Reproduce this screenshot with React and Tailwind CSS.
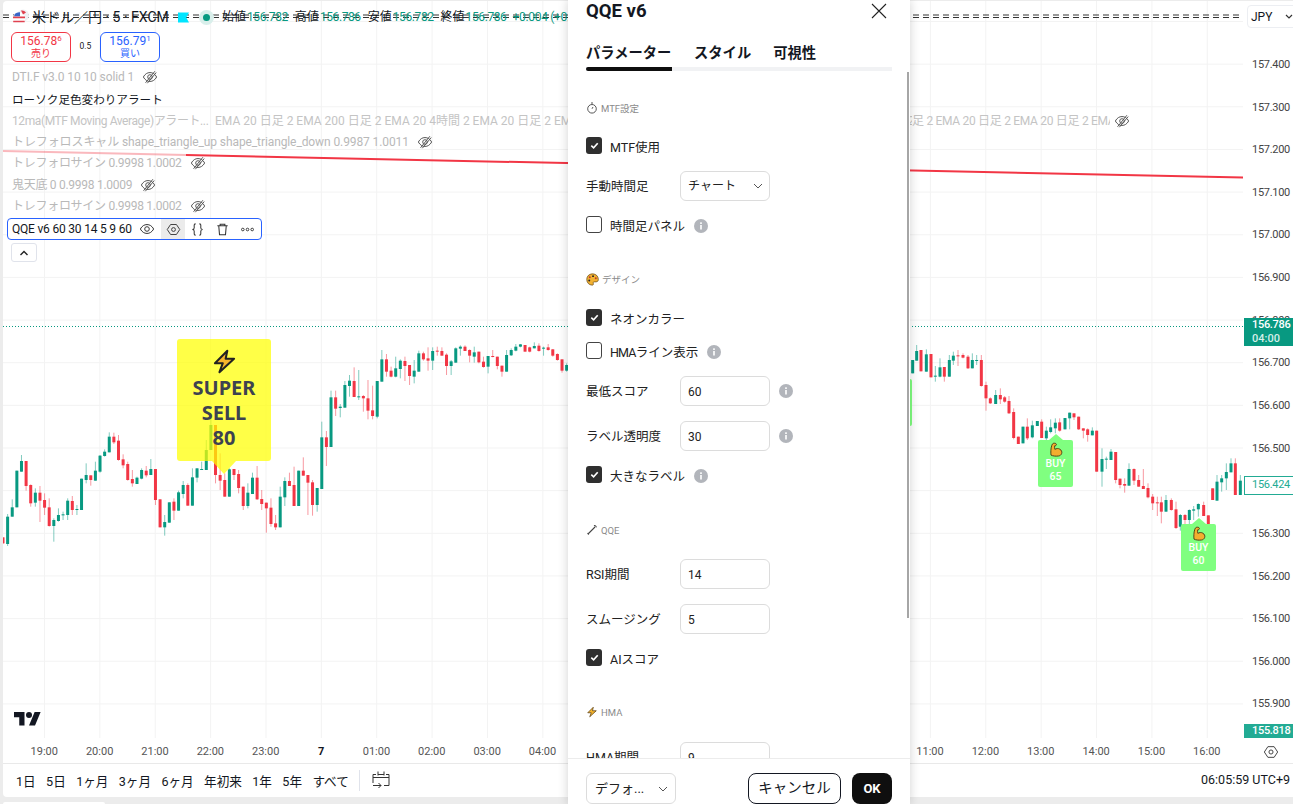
import React from "react";

const L = [[652,670,652,672,0],[590,672,582,678,1],[562,590,538,590,1],[452,562,452,562,1],[423,455,405,455,1],[423,498,423,512,0],[495,550,493,560,0],[518,548,505,560,1],[518,542,498,606,0],[540,563,520,585,0],[562,618,535,620,0],[600,618,595,665,1],[585,603,565,605,1],[583,585,575,600,1],[542,585,535,600,1],[543,570,528,585,0],[567,570,555,585,1],[476,570,476,570,1],[465,480,430,490,1],[466,480,466,497,0],[452,482,425,482,1],[407,455,405,458,1],[395,408,388,410,1],[350,397,337,397,1],[350,367,338,372,0],[362,420,345,422,0],[418,436,403,445,0],[432,480,425,482,0],[477,490,450,500,0],[473,492,470,492,1],[450,476,445,478,1],[452,466,438,472,0],[447,465,417,465,1],[447,540,447,555,0],[538,622,538,622,0],[606,622,585,647,1],[547,608,547,608,1],[545,572,535,600,0],[517,572,512,572,1],[495,522,483,535,1],[495,557,490,557,0],[472,557,445,557,1],[445,473,445,487,1],[447,449,425,450,1],[390,450,360,450,1],[315,390,295,390,1],[315,465,315,490,0],[465,482,400,510,0],[480,530,460,530,0],[448,530,445,530,1],[447,465,447,480,0],[462,504,450,520,0],[500,558,500,570,0],[518,558,490,565,1],[473,522,458,522,1],[473,538,438,540,0],[537,552,510,570,0],[548,565,548,638,0],[563,612,535,620,0],[610,622,585,630,0],[530,622,500,622,1],[483,532,472,558,1],[483,498,458,498,0],[495,558,440,558,0],[452,558,452,558,1],[452,467,412,467,0],[465,488,465,585,0],[487,555,480,587,0],[504,555,504,575,1],[352,507,305,507,1],[352,381,333,438,0],[232,381,212,381,1],[232,266,212,288,0],[260,264,252,292,1],[195,263,183,263,1],[182,198,165,230,1],[183,231,142,231,0],[229,231,150,240,1],[228,235,225,275,0],[235,272,180,298,0],[271,288,197,298,0],[183,290,183,295,1],[118,185,90,185,1],[118,155,102,170,0],[152,170,140,172,0],[145,170,110,172,1],[122,147,118,175,1],[123,138,110,183,0],[135,168,135,195,0],[152,170,120,190,1],[100,155,92,155,1],[100,118,95,122,0],[115,122,82,152,0],[93,122,82,150,1],[92,95,80,107,0],[93,107,82,107,0],[104,138,100,165,0],[124,138,120,165,1],[85,128,82,128,1],[80,86,76,107,1],[80,93,76,93,0],[90,107,88,127,0],[97,110,80,128,1],[95,127,95,130,0],[125,141,110,143,0],[108,140,108,160,1],[108,110,90,112,0],[110,138,110,148,0],[137,155,137,170,0],[105,155,90,155,1],[90,106,85,108,1],[80,92,72,94,1],[73,80,72,82,1],[75,95,75,95,0],[82,95,80,97,0],[78,85,67,85,1],[77,93,70,95,0],[83,85,80,107,1],[82,90,72,92,0],[88,107,87,110,0],[102,120,100,122,0],[118,152,118,158,0],[135,152,130,155,1]];

const R = [[8,120,160,120,160,1],[20,93,122,75,122,1],[33,90,154,90,154,0],[49,103,155,88,155,1],[63,102,172,102,172,0],[76,167,170,138,185,1],[90,142,170,115,172,1],[103,141,170,141,185,0],[118,120,170,105,170,1],[130,107,122,95,135,1],[144,106,108,90,138,0],[159,105,113,100,115,0],[174,110,145,105,147,0],[187,120,145,100,145,1],[200,120,122,105,135,1],[214,120,198,105,200,0],[228,195,235,185,272,0],[241,235,250,232,252,0],[257,225,252,210,252,1],[271,225,238,205,252,0],[284,232,245,228,248,0],[297,243,280,228,282,0],[311,276,354,265,358,0],[325,350,372,350,372,0],[339,320,370,320,370,1],[352,320,355,295,360,0],[367,316,352,302,355,1],[382,303,318,303,318,1],[395,305,354,298,354,0],[409,332,355,320,365,1],[422,322,336,298,340,1],[436,308,325,295,340,1],[449,307,332,295,335,0],[465,294,328,294,328,1],[479,278,295,278,328,1],[492,280,292,280,300,0],[506,290,328,290,330,0],[520,325,332,325,355,0],[533,328,345,325,365,0],[547,332,346,322,346,1],[560,332,455,332,455,0],[576,417,455,385,500,1],[589,416,418,410,447,1],[603,395,420,387,420,1],[617,396,480,396,490,0],[630,476,495,476,505,0],[644,492,497,475,518,0],[657,447,497,430,497,1],[672,447,482,445,495,0],[686,480,500,465,500,0],[700,498,507,447,507,0],[714,504,532,490,535,0],[728,530,550,522,570,0],[742,547,550,530,588,0],[754,547,575,530,610,0],[768,540,575,525,575,1],[784,540,570,535,572,0],[798,568,624,545,627,0],[811,585,620,582,632,1],[825,585,600,582,620,0],[838,570,600,568,615,1],[851,568,572,558,600,1],[865,552,568,550,590,1],[881,555,588,545,588,0],[895,586,630,586,630,0],[908,505,540,505,540,0],[921,485,542,465,542,1],[935,475,487,465,515,1],[949,456,475,430,510,1],[963,430,457,415,457,1],[976,430,525,415,525,0],[991,482,525,465,525,1]];

const candles = [
  ...L.map((c, i) => ({ x: 3 + i * 4.62, bt: c[0], bb: c[1], wt: c[2], wb: c[3], up: c[4] })),
  ...R.map((c) => ({ x: 910 + c[0] / 3, bt: c[1], bb: c[2], wt: c[3], wb: c[4], up: c[5] })),
];

const hours = ["19:00","20:00","21:00","22:00","23:00","7","01:00","02:00","03:00","04:00","05:00","06:00","07:00","08:00","09:00","10:00","11:00","12:00","13:00","14:00","15:00","16:00"];
const prices = ["157.400","157.300","157.200","157.100","157.000","156.900","156.800","156.700","156.600","156.500","156.400","156.300","156.200","156.100","156.000","155.900"];

function Chart() {
  return (
    <svg className="absolute inset-0 h-full w-full" viewBox="3 1 1240 737">
      {prices.concat(["x"]).map((p, i) => (
        <line key={i} x1="3" x2="1243" y1={21.5 + i * 42.65} y2={21.5 + i * 42.65} stroke="#f3f3f3" strokeWidth="1" />
      ))}
      {hours.map((h, i) => (
        <line key={h} x1={44.5 + i * 55.37} x2={44.5 + i * 55.37} y1="1" y2="738" stroke="#f3f3f3" strokeWidth="1" />
      ))}
      <line x1="3" x2="1243" y1="15" y2="15" stroke="#333" strokeDasharray="6 4" />
      <line x1="3" x2="1243" y1="17.5" y2="17.5" stroke="#333" strokeDasharray="6 4" />
      <line x1="3" x2="186" y1="151" y2="155" stroke="#f23645" strokeWidth="2" opacity="0.35" />
      <line x1="186" x2="1243" y1="155" y2="177.5" stroke="#f23645" strokeWidth="2" />
      <line x1="3" x2="1243" y1="326.5" y2="326.5" stroke="#089981" strokeDasharray="1 2" />
      {candles.map((c, i) => {
        const col = c.up ? "#089981" : "#f23645";
        const h = Math.max((c.bb - c.bt) / 3, 1);
        return (
          <g key={i}>
            <rect x={c.x - 0.5} y={320 + c.wt / 3} width="1" height={(c.wb - c.wt) / 3} fill={col} opacity="0.5" />
            <rect x={c.x - 1.5} y={320 + c.bt / 3} width="3" height={h} fill={col} />
          </g>
        );
      })}
    </svg>
  );
}

function EyeOff({ className }) {
  return (
    <svg className={className} viewBox="0 0 18 18" fill="none" stroke="#555" strokeWidth="1.1">
      <path d="M1.5 9C3.5 5.5 6 4 9 4s5.5 1.5 7.5 5c-2 3.5-4.5 5-7.5 5s-5.5-1.5-7.5-5z" />
      <circle cx="9" cy="9" r="2.6" />
      <path d="M14.5 2.5 4 15.5M16 4 6 16" />
    </svg>
  );
}
function Eye({ className }) {
  return (
    <svg className={className} viewBox="0 0 18 18" fill="none" stroke="#333" strokeWidth="1.1">
      <path d="M1.5 9C3.5 5.5 6 4 9 4s5.5 1.5 7.5 5c-2 3.5-4.5 5-7.5 5s-5.5-1.5-7.5-5z" />
      <circle cx="9" cy="9" r="2.6" />
    </svg>
  );
}
function Hex({ className, color = "#333" }) {
  return (
    <svg className={className} viewBox="0 0 18 18" fill="none" stroke={color} strokeWidth="1.1" strokeLinejoin="round">
      <path d="M5.5 3h7L16.5 9l-4 6h-7l-4-6z" />
      <circle cx="9" cy="9" r="2.3" />
    </svg>
  );
}
function Bolt({ className, stroke = "#222", sw = 1.8 }) {
  return (
    <svg className={className} viewBox="0 0 24 24" fill="#f7b52c" stroke={stroke} strokeWidth={sw} strokeLinejoin="round">
      <path d="M14.500 2.500 3.500 13.500h7l-3 8 13-12h-7.500l1.500-7z" />
    </svg>
  );
}
function Muscle({ className }) {
  return (
    <svg className={className} viewBox="0 0 16 16" fill="#f3ae2f" stroke="#4a3410" strokeWidth="0.9" strokeLinejoin="round">
      <path d="M5.2 1.4c1.6-.5 3 0 3.2 1 .2.9-.7 1.4-1.7 1.4-.3 1.2-.2 2.5.2 3.6 1.2-1 3.4-1.2 5 -.2 1.6 1 2.3 2.7 1.7 4.4-.4 1.300-1.600 2.200-3.200 2.400-2.600.4-5.800 0-7.400-.9C2.700 11 2.700 6.500 3.800 3.300c.3-.9.700-1.600 1.400-1.900z" />
    </svg>
  );
}

function TextRow({ children, tight }) {
  return (
    <div className={`flex h-[21.5px] items-center whitespace-nowrap pl-[9px] text-[12px] text-[#b9b9b9] ${tight ? "tracking-[-0.28px]" : "tracking-[-0.1px]"}`}>
      <span>{children}</span>
      <EyeOff className="ml-[8px] h-[16px] w-[16px]" />
    </div>
  );
}

function Value({ children }) {
  return <span className="ml-[1px] tracking-[-0.4px] text-[#089981]">{children}</span>;
}

function Legend() {
  return (
    <div className="absolute left-0 top-0 flex flex-col">
      <div className="flex h-[30px] items-center whitespace-nowrap pl-[9px] pt-[2px]">
        <span className="mr-[2px] block h-[18px] w-[18px]">
          <svg viewBox="0 0 18 18" className="h-[18px] w-[18px]">
            <circle cx="11" cy="7.5" r="6" fill="#eef0f4" />
            <circle cx="7" cy="10.500" r="6.300" fill="#fff" />
            <path d="M1 8.500h12v1.800H1zM1.200 12.800h11.500v1.500H1.200z" fill="#e0414f" />
            <path d="M3 5.800A6.300 6.300 0 0 1 8 4.300v4H2z" fill="#3a66c8" />
            <path d="M9 2.500a5 5 0 0 1 5 2l-3 2z" fill="#e0414f" />
          </svg>
        </span>
        <span className="w-[135px] text-[14px] text-[#131722]">米ドル／円 · 5 · FXCM</span>
        <svg viewBox="0 0 12 11" className="ml-[11px] h-[11px] w-[11px]"><path d="M0 0h12L9 5.500l3 5.500H0z" fill="#00e5ff" /></svg>
        <span className="ml-[10px] flex h-[15px] w-[15px] items-center justify-center rounded-full bg-[#d9efeb]"><span className="h-[7px] w-[7px] rounded-full bg-[#089981]" /></span>
        <span className="ml-[8px] flex items-center text-[12px] text-[#131722]">
          <span>始値</span><Value>156.782</Value>
          <span className="ml-[7px]">高値</span><Value>156.786</Value>
          <span className="ml-[7px]">安値</span><Value>156.782</Value>
          <span className="ml-[7px]">終値</span><Value>156.786</Value>
          <span className="ml-[6px] tracking-[-0.3px] text-[#089981]">+0.004 (+0.00%)</span>
        </span>
      </div>
      <div className="flex h-[31px] items-center pl-[8px]">
        <div className="flex h-[30px] w-[60px] flex-col items-center justify-center rounded-[6px] border border-[#f23645] bg-white text-[#f23645]">
          <span className="text-[12px] leading-[14px]">156.78<sup className="text-[8px]">6</sup></span>
          <span className="text-[10px] leading-[12px]">売り</span>
        </div>
        <span className="w-[29px] text-center text-[8.500px] text-[#131722]">0.5</span>
        <div className="flex h-[30px] w-[60px] flex-col items-center justify-center rounded-[6px] border border-[#2962ff] bg-white text-[#2962ff]">
          <span className="text-[12px] leading-[14px]">156.79<sup className="text-[8px]">1</sup></span>
          <span className="text-[10px] leading-[12px]">買い</span>
        </div>
      </div>
      <div className="h-[4px]" />
      <TextRow>DTI.F v3.0 10 10 solid 1</TextRow>
      <div className="flex h-[22.5px] items-center whitespace-nowrap pl-[9px] pt-[3px] text-[11.600px] text-[#131722]">ローソク足色変わりアラート</div>
      <div className="flex h-[21px] items-center whitespace-nowrap pl-[9px] text-[12px] text-[#c4c4c4]">
        <span className="w-[198px] overflow-hidden tracking-[-0.4px]">12ma(MTF Moving Average)アラート...</span>
        <span className="ml-[5px] w-[697px] overflow-hidden">EMA 20 日足 2 EMA 200 日足 2 EMA 20 4時間 2 EMA 20 日足 2 EMA 20 日足 2 EMA 20 日足 2 EMA 20 日足 2 EMA 20 日足 2 EMA 20 日足 2 EMA 20</span>
        <span className="w-[198px] overflow-hidden tracking-[-0.3px]">足 2 EMA 20 日足 2 EMA 20 日足 2 EMA 2</span>
        <EyeOff className="ml-[4px] h-[16px] w-[16px]" />
      </div>
      <TextRow>トレフォロスキャル shape_triangle_up shape_triangle_down 0.9987 1.0011</TextRow>
      <TextRow tight>トレフォロサイン 0.9998 1.0002</TextRow>
      <TextRow tight>鬼天底 0 0.9998 1.0009</TextRow>
      <TextRow tight>トレフォロサイン 0.9998 1.0002</TextRow>
      <div className="ml-[4px] mt-[1px] flex h-[22px] w-[255px] items-center rounded-[4px] border border-[#2962ff] bg-white pl-[4px] text-[12px] text-[#131722]">
        <span className="w-[122px] whitespace-nowrap tracking-[-0.2px]">QQE v6 60 30 14 5 9 60</span>
        <Eye className="ml-[5px] h-[16px] w-[16px]" />
        <span className="ml-[6px] flex h-[20px] w-[24px] items-center justify-center bg-[#ebebeb]"><Hex className="h-[15px] w-[15px]" /></span>
        <svg viewBox="0 0 16 16" className="ml-[5px] h-[15px] w-[15px]" fill="none" stroke="#333" strokeWidth="1.1"><path d="M6 2C4 2 4.500 4 4.500 6c0 1.500-1 2-2 2 1 0 2 .5 2 2 0 2-.5 4 1.500 4M10 2c2 0 1.500 2 1.500 4 0 1.500 1 2 2 2-1 0-2 .5-2 2 0 2 .5 4-1.500 4" /></svg>
        <svg viewBox="0 0 16 16" className="ml-[10px] h-[15px] w-[15px]" fill="none" stroke="#333" strokeWidth="1.1"><path d="M2.500 4h11M5.500 4V2.500h5V4M4 4l.8 9.500h6.400L12 4" /></svg>
        <svg viewBox="0 0 16 16" className="ml-[10px] h-[15px] w-[15px]" fill="none" stroke="#333" strokeWidth="1"><circle cx="3" cy="8" r="1.400" /><circle cx="8" cy="8" r="1.400" /><circle cx="13" cy="8" r="1.400" /></svg>
      </div>
      <div className="ml-[8px] mt-[3px] flex h-[19px] w-[26px] items-center justify-center rounded-[3px] border border-[#e0e3eb] bg-white">
        <svg viewBox="0 0 10 6" className="h-[6px] w-[10px]" fill="none" stroke="#222" strokeWidth="1.4"><path d="M1.500 5 5 1.500 8.500 5" /></svg>
      </div>
    </div>
  );
}

function SellLabel() {
  return (
    <div className="absolute left-[174px] top-[338px] flex w-[94px] flex-col items-center">
      <div className="flex h-[122px] w-full flex-col items-center rounded-[3px] bg-[#ffff00b8] pt-[9px] font-['Noto_Sans',sans-serif] text-[20px] font-bold leading-[25px] text-[#3d4250]">
        <Bolt className="h-[27px] w-[27px]" />
        <span>SUPER</span>
        <span>SELL</span>
        <span>80</span>
      </div>
      <svg viewBox="0 0 24 13" className="h-[13px] w-[24px]"><path d="M0 0h24L12 13z" fill="#ffff00b8" /></svg>
    </div>
  );
}

function BuyLabel({ pos, a, b }) {
  return (
    <div className={`absolute flex w-[35px] flex-col items-center ${pos}`}>
      <svg viewBox="0 0 14 6" className="h-[6px] w-[14px]"><path d="M0 6h14L7 0z" fill="#80ff80" /></svg>
      {a ? (
        <div className="flex h-[47px] w-full flex-col items-center rounded-[2px] bg-[#80ff80] pt-[2px] text-[10.500px] font-medium leading-[13px] text-white">
          <Muscle className="h-[16px] w-[16px]" />
          <span className="mt-[-1.500px]">{a}</span>
          <span>{b}</span>
        </div>
      ) : (
        <div className="h-[47px] w-full rounded-[2px] bg-[#80ff80]" />
      )}
    </div>
  );
}

function PriceAxis() {
  return (
    <div className="relative h-[737px] w-[50px] shrink-0 overflow-hidden text-[11px] text-[#444]">
      <div className="flex flex-col pl-[9px] pt-[42.800px]">
        {prices.map((p) => (
          <span key={p} className="flex h-[42.65px] items-center tracking-[-0.3px]">{p}</span>
        ))}
      </div>
      <div className="absolute left-[4px] top-[4px] flex h-[23px] w-[50px] items-center rounded-l-[4px] border border-[#eceef2] bg-white pl-[3px] text-[12px] text-[#131722]">
        JPY
        <svg viewBox="0 0 8 5" className="ml-[13px] h-[5px] w-[8px]" fill="none" stroke="#333" strokeWidth="1.2"><path d="M1 1l3 3 3-3" /></svg>
      </div>
      <div className="absolute left-[1px] top-[317px] flex h-[28px] w-[50px] flex-col bg-[#089981] pl-[8px] text-[11px] font-medium leading-[14px] text-white">
        <span className="tracking-[-0.3px]">156.786</span>
        <span className="text-[#d5efe9]">04:00</span>
      </div>
      <div className="absolute left-[1px] top-[475px] flex h-[19px] w-[50px] items-center border border-[#22ab94] bg-white pl-[7px] tracking-[-0.3px] text-[#22ab94]">156.424</div>
      <div className="absolute left-[1px] top-[723px] flex h-[14px] w-[50px] items-center bg-[#22ab94] pl-[8px] font-medium tracking-[-0.3px] text-white">155.818</div>
    </div>
  );
}

function Bottom() {
  const items = ["1日", "5日", "1ヶ月", "3ヶ月", "6ヶ月", "年初来", "1年", "5年", "すべて"];
  return (
    <div className="flex h-[33px] items-center border-t border-[#e9e9e9] pl-[13px] pr-[3px] text-[12.600px] text-[#131722]">
      <div className="flex gap-[10.400px] pt-[4px]">
        {items.map((i) => <span key={i} className="whitespace-nowrap">{i}</span>)}
      </div>
      <span className="ml-[10px] h-[21px] w-px bg-[#e0e3eb]" />
      <svg viewBox="0 0 20 20" className="ml-[11px] h-[20px] w-[20px]" fill="none" stroke="#333" strokeWidth="1">
        <path d="M2 13V4.500h3M15 4.500h3V15.500h-5M7 1.500v4M13 1.500v4M2 7.500h16M7 4.500h6" />
        <path d="M2 15.500h8M7.500 13l2.500 2.500L7.500 18" />
      </svg>
      <span className="ml-auto whitespace-nowrap pt-[1px] text-[12.500px]">06:05:59 UTC+9</span>
    </div>
  );
}

function Check({ on }) {
  return on ? (
    <span className="flex h-[17px] w-[16px] shrink-0 items-center justify-center rounded-[3px] bg-[#2f2f2f]">
      <svg viewBox="0 0 12 12" className="h-[11px] w-[11px]" fill="none" stroke="#fff" strokeWidth="1.800"><path d="M2.500 6.200 5 8.500l4.500-5" /></svg>
    </span>
  ) : (
    <span className="h-[17px] w-[16px] shrink-0 rounded-[3px] border border-[#444] bg-white" />
  );
}
function Info({ className }) {
  return (
    <svg viewBox="0 0 14 14" className={`h-[14px] w-[14px] shrink-0 ${className || ""}`}>
      <circle cx="7" cy="7" r="7" fill="#b2b5bb" />
      <rect x="6.200" y="6" width="1.600" height="4.500" fill="#fff" />
      <rect x="6.200" y="3.300" width="1.600" height="1.700" fill="#fff" />
    </svg>
  );
}
function CheckRow({ on, label, info, mt }) {
  return (
    <div className={`flex h-[17px] items-center ${mt}`}>
      <Check on={on} />
      <span className="ml-[8px] mt-[6px] whitespace-nowrap">{label}</span>
      {info && <Info className="ml-[9px] mt-[2px]" />}
    </div>
  );
}
function InputRow({ label, value, info, mt }) {
  return (
    <div className={`flex h-[30px] items-center ${mt}`}>
      <span className="mt-[2px] w-[94px] whitespace-nowrap">{label}</span>
      <span className="flex h-[30px] w-[90px] items-center rounded-[6px] border border-[#dcdcdc] pl-[7px] pt-[1px] text-[12px]">{value}</span>
      {info && <Info className="ml-[9px]" />}
    </div>
  );
}
function Section({ icon, label, mt }) {
  return (
    <div className={`flex h-[14px] items-center gap-[3px] text-[9.500px] text-[#8a8a8a] ${mt}`}>
      {icon}
      <span className="pt-[2px]">{label}</span>
    </div>
  );
}

function Dialog() {
  return (
    <div className="absolute left-[568px] top-0 flex h-[804px] w-[342px] flex-col bg-white text-[12.500px] text-[#222] shadow-[0_0_10px_rgba(0,0,0,0.18)]">
      <div className="flex h-[24px] items-center justify-between pl-[18px] pr-[23px]">
        <span className="text-[18.500px] font-bold text-[#131722]">QQE v6</span>
        <svg viewBox="0 0 16 16" className="mt-[-2px] h-[16px] w-[16px]" fill="none" stroke="#222" strokeWidth="1.100"><path d="M1 1l14 14M15 1 1 15" /></svg>
      </div>
      <div className="mx-[18px] mt-[18px] flex h-[29px] items-start border-b-[4px] border-[#f1f2f4] text-[14.300px] font-bold text-[#131722]">
        <span className="relative h-[25px] w-[86px] whitespace-nowrap leading-[22px]">
          パラメーター
          <span className="absolute bottom-[-4px] left-0 h-[4px] w-[86px] rounded-l-[2px] bg-[#0f0f0f]" />
        </span>
        <span className="ml-[22px] whitespace-nowrap leading-[22px]">スタイル</span>
        <span className="ml-[22px] whitespace-nowrap leading-[22px]">可視性</span>
      </div>
      <div className="relative flex-1 overflow-hidden px-[18px]">
        <div className="absolute right-[1px] top-[1px] h-[546px] w-[2px] bg-[#a6a6a6]" />
        <Section mt="mt-[30px]" label="MTF設定" icon={
          <svg viewBox="0 0 12 12" className="h-[12px] w-[12px]" fill="none" stroke="#444" strokeWidth="0.9"><circle cx="6" cy="6.800" r="4.300" /><path d="M6 6.800 7 5M5 1h2" /></svg>
        } />
        <CheckRow mt="mt-[22px]" on label="MTF使用" />
        <div className="mt-[17px] flex h-[30px] items-center">
          <span className="mt-[2px] w-[94px] whitespace-nowrap">手動時間足</span>
          <span className="flex h-[30px] w-[90px] items-center justify-between rounded-[6px] border border-[#dcdcdc] pl-[7px] pr-[6px] text-[12px]">
            チャート
            <svg viewBox="0 0 10 6" className="h-[6px] w-[10px]" fill="none" stroke="#555" strokeWidth="1"><path d="M1 1l4 4 4-4" /></svg>
          </span>
        </div>
        <CheckRow mt="mt-[15px]" label="時間足パネル" info />
        <Section mt="mt-[39px]" label="デザイン" icon={
          <svg viewBox="0 0 12 12" className="h-[13px] w-[13px]"><path d="M6 .8C2.800.8.700 3 .700 6c0 3 2.300 5.200 5 5.200 1.300 0 1.300-1 1-1.700-.3-.8.2-1.300 1-1.300h1.500c1.500 0 2.200-1 2.200-2.200C11.400 3 9.200.8 6 .8z" fill="#f2b233" stroke="#5a3d10" strokeWidth="0.600" /><circle cx="3.500" cy="4" r=".9" fill="#c0392b" /><circle cx="6.500" cy="2.900" r=".9" fill="#222" /><circle cx="9" cy="4.800" r=".9" fill="#c0392b" /><circle cx="3" cy="7" r=".9" fill="#222" /></svg>
        } />
        <CheckRow mt="mt-[23px]" on label="ネオンカラー" />
        <CheckRow mt="mt-[16px]" label={<><span className="tracking-[-0.8px]">HMA</span>ライン表示</>} info />
        <InputRow mt="mt-[17px]" label="最低スコア" value="60" info />
        <InputRow mt="mt-[15px]" label="ラベル透明度" value="30" info />
        <CheckRow mt="mt-[15px]" on label="大きなラベル" info />
        <Section mt="mt-[40px]" label="QQE" icon={
          <svg viewBox="0 0 12 12" className="h-[12px] w-[12px]" fill="none" stroke="#444" strokeWidth="1.100"><path d="M2 10 9 3M8 1.800c1-.6 2.300.2 2.200 1.600M1.500 9.200l1.300 1.300" /></svg>
        } />
        <InputRow mt="mt-[22px]" label="RSI期間" value="14" />
        <InputRow mt="mt-[15px]" label="スムージング" value="5" />
        <CheckRow mt="mt-[15px]" on label="AIスコア" />
        <Section mt="mt-[39px]" label="HMA" icon={<Bolt className="h-[12px] w-[12px]" stroke="#5a3d10" sw={1.500} />} />
        <InputRow mt="mt-[23px]" label="HMA期間" value="9" />
      </div>
      <div className="flex h-[46px] shrink-0 items-start border-t border-[#ececec] px-[18px] pt-[14px]">
        <span className="flex h-[31px] w-[90px] items-center justify-between rounded-[6px] border border-[#dcdcdc] pl-[8px] pr-[7px] text-[13px]">
          デフォ...
          <svg viewBox="0 0 10 6" className="h-[6px] w-[10px]" fill="none" stroke="#555" strokeWidth="1"><path d="M1 1l4 4 4-4" /></svg>
        </span>
        <span className="ml-auto flex h-[31px] w-[93px] items-center justify-center rounded-[8px] border border-[#131722] text-[14.500px] text-[#131722]">キャンセル</span>
        <span className="ml-[11px] flex h-[31px] w-[40px] items-center justify-center rounded-[8px] bg-[#0f0f0f] text-[13px] font-bold text-white">OK</span>
      </div>
    </div>
  );
}

export default function App() {
  return (
    <div className="relative h-[804px] w-[1293px] overflow-hidden bg-[#ececec] pl-[3px] pt-[1px] font-['Roboto','Noto_Sans_CJK_JP',sans-serif]">
      <div className="h-[796px] w-[1290px] rounded-l-[4px] bg-white">
        <div className="flex h-[737px]">
          <div className="relative h-[737px] w-[1240px] shrink-0">
            <Chart />
            <svg viewBox="0 0 36 28" className="absolute left-[11px] top-[708px] h-[21px] w-[27px]" fill="#131722"><path d="M14 22H7V11H0V4h14v18zM28 22h-8l7.500-18h8L28 22z" /><circle cx="20" cy="8" r="4" /></svg>
            <SellLabel />
            <BuyLabel pos="left-[874px] top-[372px]" />
            <BuyLabel pos="left-[1035px] top-[433px]" a="BUY" b="65" />
            <BuyLabel pos="left-[1178px] top-[517px]" a="BUY" b="60" />
            <Legend />
          </div>
          <PriceAxis />
        </div>
        <div className="flex h-[25px] items-center pl-[13.600px] pt-[3px] text-[11px] text-[#555]">
          {hours.map((h) => (
            <span key={h} className={`w-[55.370px] shrink-0 text-center ${h === "7" ? "font-bold text-[#131722]" : ""}`}>{h}</span>
          ))}
          <Hex className="ml-[28px] h-[16px] w-[16px]" color="#444" />
        </div>
        <Bottom />
      </div>
      <div className="mt-[5px] h-[2px] w-[102px] rounded-t-[4px] bg-white" />
      <Dialog />
    </div>
  );
}
